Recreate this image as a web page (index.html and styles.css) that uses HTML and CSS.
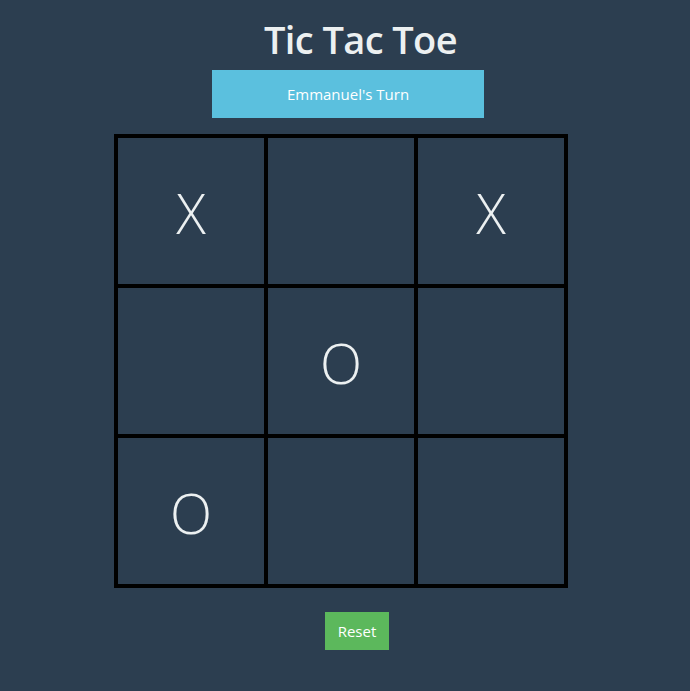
FILE: index.html
```html
<!DOCTYPE html>
<html>
<head>
<meta charset="utf-8">
<link rel="stylesheet" href="styles.css">
</head>
<body>
<div class="app">
  <h1 class="title">Tic Tac Toe</h1>
  <div class="turn">Emmanuel's Turn</div>
  <div class="board">
    <div class="cell">X</div>
    <div class="cell"></div>
    <div class="cell">X</div>
    <div class="cell"></div>
    <div class="cell">O</div>
    <div class="cell"></div>
    <div class="cell">O</div>
    <div class="cell"></div>
    <div class="cell"></div>
  </div>
  <button class="reset">Reset</button>
</div>
</body>
</html>
```
FILE: styles.css
```css
html, body {
  margin: 0;
  padding: 0;
  background: #2c3e50;
  height: 100%;
}
body {
  font-family: "Open Sans", "Noto Sans", sans-serif;
  color: #ecf0f1;
}
.app {
  display: flex;
  flex-direction: column;
  align-items: flex-start;
}
.title {
  margin: 17px 0 0 264px;
  font-size: 38px;
  line-height: 44px;
  font-weight: 600;
  letter-spacing: -0.6px;
  color: #ecf0f1;
}
.turn {
  margin: 9px 0 0 212px;
  width: 272px;
  height: 48px;
  background: #5bc0de;
  color: #fff;
  font-size: 15px;
  display: flex;
  align-items: center;
  justify-content: center;
}
.board {
  margin: 16px 0 0 114px;
  display: grid;
  grid-template-columns: repeat(3, 150px);
  grid-template-rows: repeat(3, 150px);
  border: 2px solid #000;
}
.cell {
  border: 2px solid #000;
  display: flex;
  align-items: center;
  justify-content: center;
  font-size: 55px;
  font-weight: 300;
  color: #ecf0f1;
  padding-top: 2px;
  box-sizing: border-box;
}
.reset {
  margin: 24px 0 0 325px;
  width: 64px;
  height: 38px;
  background: #5cb85c;
  border: none;
  color: #fff;
  font-family: "Open Sans", "Noto Sans", sans-serif;
  font-size: 15px;
  padding: 0;
}
```
